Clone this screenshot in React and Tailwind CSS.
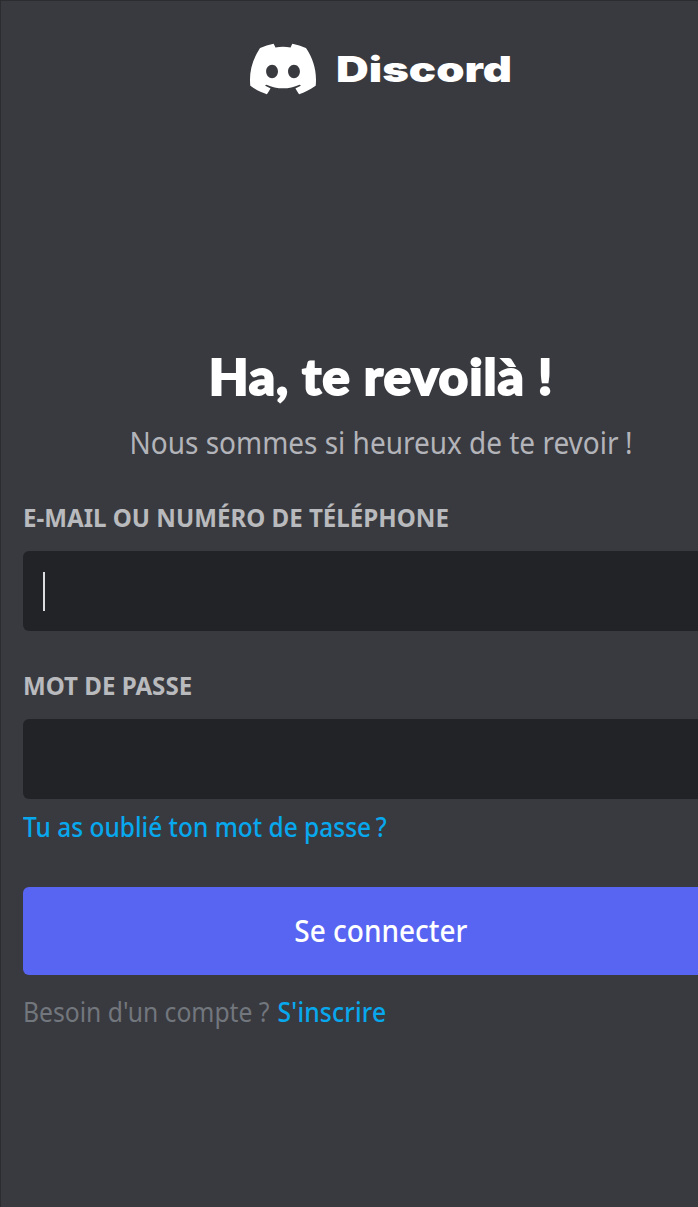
import { SiDiscord } from "react-icons/si";

function Field({ label, focused }) {
  return (
    <label className="flex flex-col">
      <span className="h-[34px] origin-left scale-x-[0.984] text-[24.5px] leading-[34px] font-bold whitespace-nowrap text-[#b9babd]">
        {label}
      </span>
      <span className="mt-[16px] flex h-[80px] items-center rounded-[6px] bg-[#222327] pl-[20px]">
        {focused && <span className="h-[39px] w-[2px] bg-[#dcddde]" />}
      </span>
    </label>
  );
}

export default function App() {
  return (
    <div className="h-[1207px] w-full overflow-hidden border-t border-l border-[#2b2c30] bg-[#393a3f] font-['Noto_Sans',sans-serif]">
      <main className="flex w-[760px] flex-col px-[22px]">
        <header className="mt-[35px] flex h-[66px] items-center pl-[227px] text-white">
          <SiDiscord className="size-[66px] shrink-0" />
          <span className="ml-[20px] origin-left scale-x-[1.295] font-['Inter',sans-serif] text-[35px] leading-[50px] font-black">
            Discord
          </span>
        </header>
        <h1 className="mt-[240px] scale-x-[1.052] text-center font-['Lato',sans-serif] text-[49px] leading-[68px] font-black tracking-[0.8px] whitespace-nowrap text-white [-webkit-text-stroke:1.8px_white]">
          Ha, te revoilà !
        </h1>
        <p className="mt-[11px] scale-x-[0.902] text-center text-[31px] leading-[42px] whitespace-nowrap text-[#b3b4b9]">
          Nous sommes si heureux de te revoir<span className="[word-spacing:-1px]"> !</span>
        </p>
        <form className="mt-[38px] flex flex-col">
          <Field label="E-MAIL OU NUMÉRO DE TÉLÉPHONE" focused />
          <div className="mt-[38px] flex flex-col">
            <Field label="MOT DE PASSE" />
          </div>
          <a className="mt-[9px] origin-left scale-x-[0.89] self-start text-[27.5px] leading-[38px] font-medium whitespace-nowrap text-[#08a8ee]">
            Tu as oublié ton mot de passe<span className="[word-spacing:-2px]"> ?</span>
          </a>
          <button type="button" className="mt-[41px] h-[88px] rounded-[6px] bg-[#5865f2] pb-[2px] text-[31px] font-medium text-white">
            <span className="inline-block scale-x-[0.903]">Se connecter</span>
          </button>
        </form>
        <p className="mt-[18px] flex origin-left scale-x-[0.897] text-[27.5px] leading-[38px] whitespace-nowrap">
          <span className="text-[#72767d]">Besoin d'un compte ?</span>
          <a className="ml-[9px] font-medium tracking-[0.2px] text-[#08a8ee]">S'inscrire</a>
        </p>
      </main>
    </div>
  );
}
